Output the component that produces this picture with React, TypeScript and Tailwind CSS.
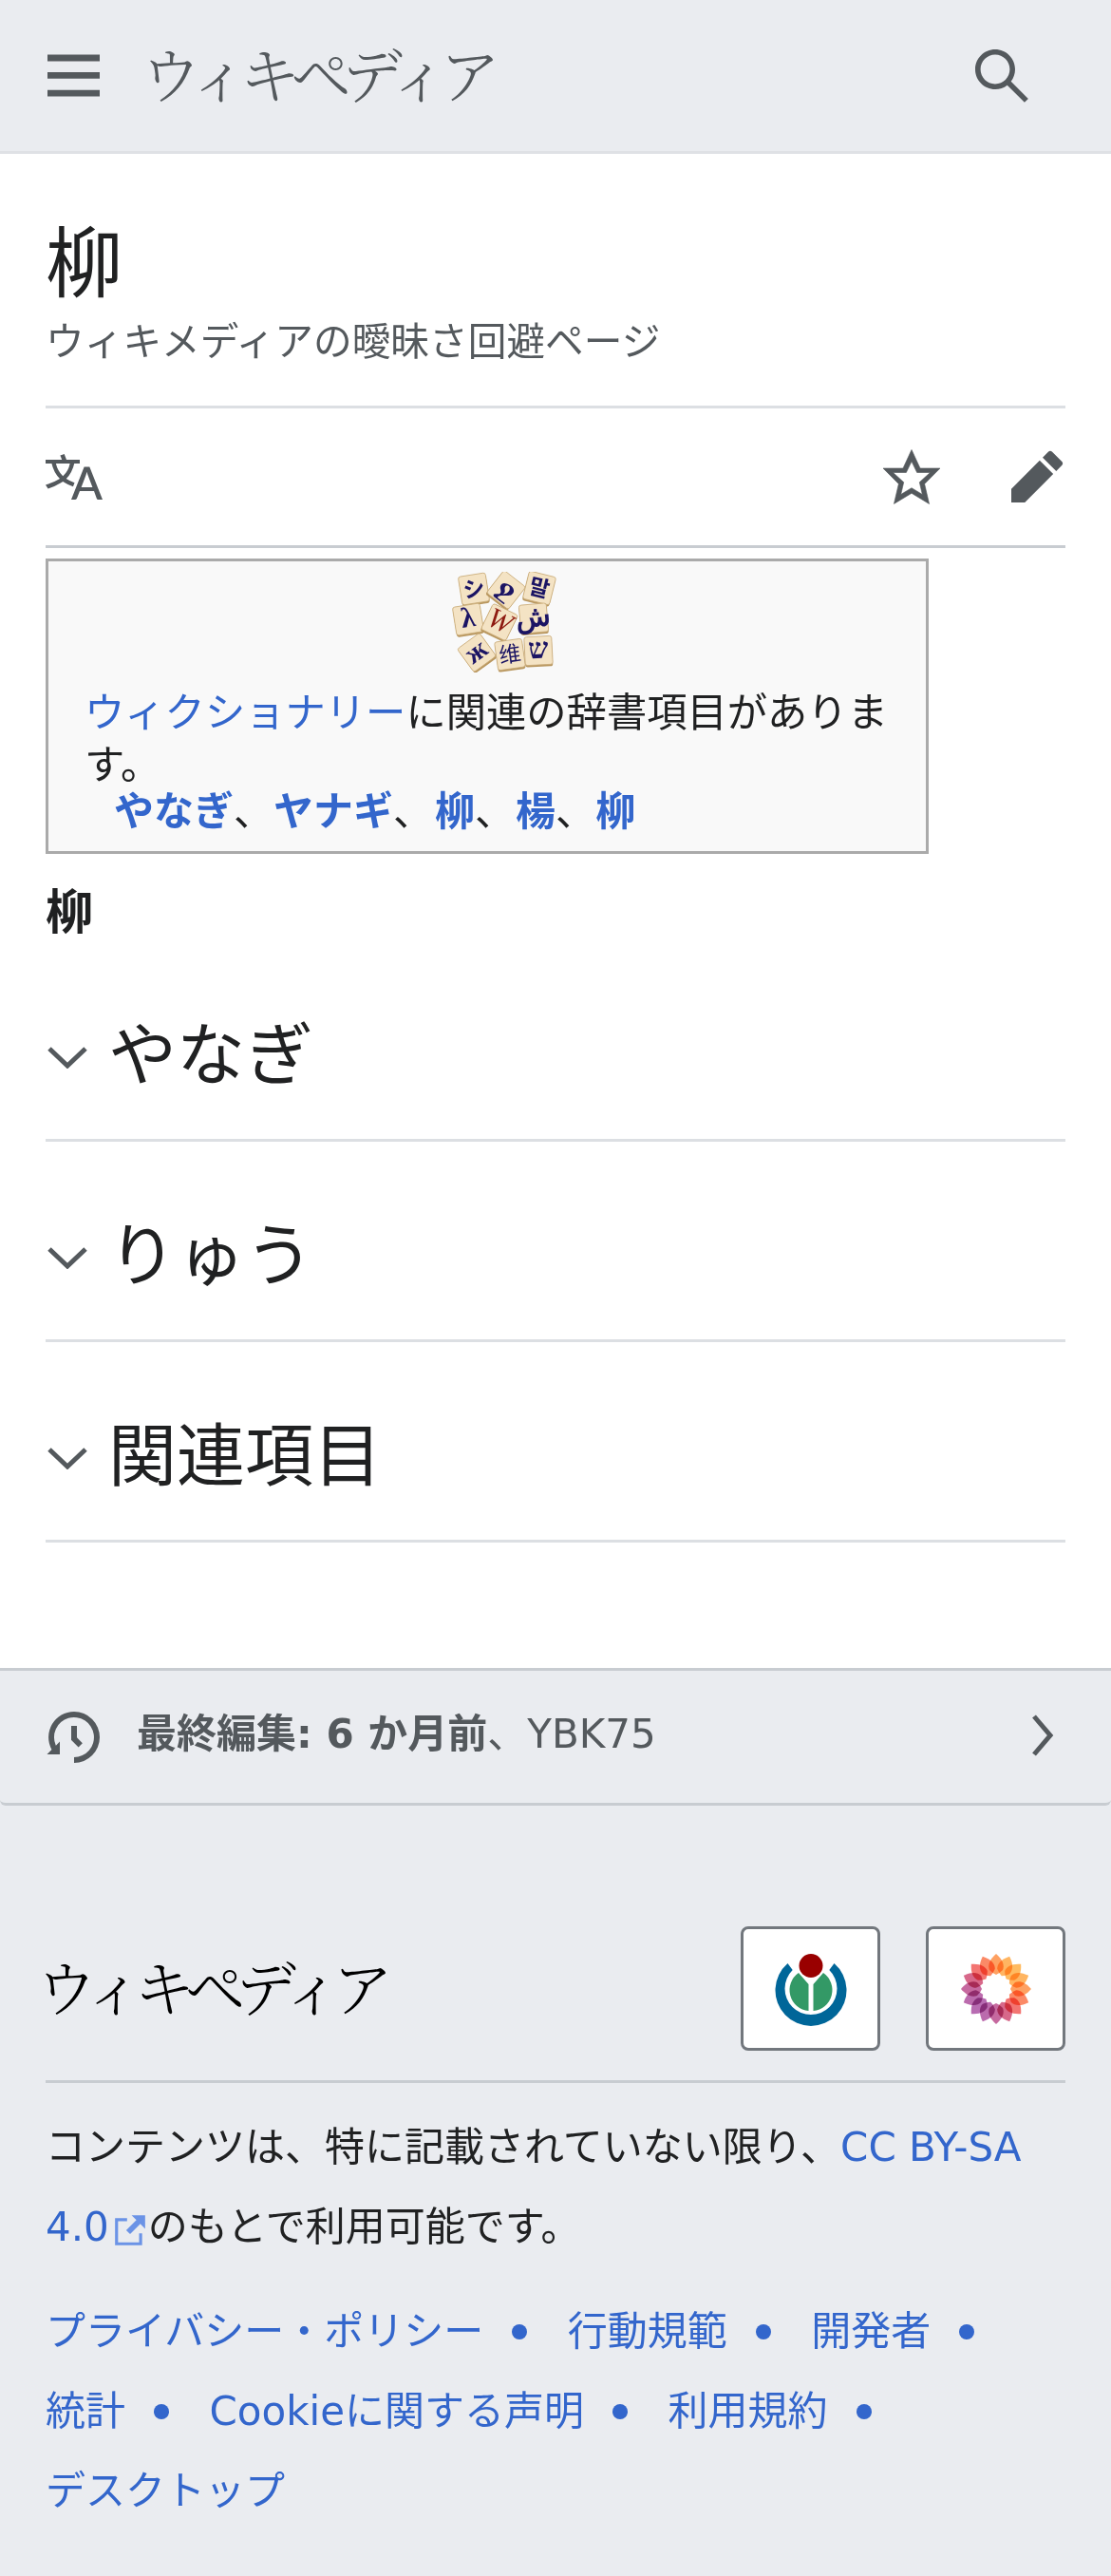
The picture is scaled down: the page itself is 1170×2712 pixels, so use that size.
const FONT = '"DejaVu Sans", "Noto Sans CJK JP", sans-serif';
const LOGO_FONT = '"Noto Serif CJK JP", "Noto Sans CJK JP", serif';

function Icon({ d, className }: { d: string; className: string }) {
  return (
    <svg viewBox="0 0 20 20" className={className} fill="currentColor" aria-hidden="true">
      <path d={d} />
    </svg>
  );
}

const tiles: [number, number, number, string, number][] = [
  [24, 18, -9, "シ", 23],
  [58, 19, 38, "ջ", 27],
  [93, 17, 14, "말", 23],
  [18, 50, -9, "λ", 30],
  [51, 53, 26, "W", 30],
  [87, 49, -5, "ش", 30],
  [27, 85, -36, "ж", 30],
  [62, 87, -8, "维", 23],
  [92, 83, -3, "ש", 30],
];

function WiktionaryLogo() {
  return (
    <svg viewBox="0 0 112 106" className="w-[112px] h-[106px] block" aria-hidden="true">
      {tiles.map(([x, y, r, t, size], i) => (
        <g key={i} transform={`translate(${x} ${y}) rotate(${r})`}>
          <rect x="-14.5" y="-13" width="29" height="30" rx="2.5" fill="#b9975f" />
          <rect x="-14.5" y="-15" width="29" height="30" rx="2.5" fill="#f4e3c4" stroke="#c9ab78" strokeWidth="0.8" />
          <text
            x="0"
            y="8"
            textAnchor="middle"
            fontSize={size}
            fontWeight={t === "W" || t === "维" ? 400 : 700}
            fill={t === "W" ? "#8e1a10" : "#1b1464"}
            fontFamily='"Liberation Serif", "DejaVu Serif", "Noto Sans CJK SC", serif'
            fontStyle={t === "W" ? "italic" : "normal"}
          >
            {t}
          </text>
        </g>
      ))}
    </svg>
  );
}

function WikimediaLogo() {
  return (
    <svg viewBox="0 -3 80 80" className="w-[80px] h-[80px] block" aria-hidden="true">
      <circle cx="40" cy="12.5" r="12.5" fill="#990000" />
      <path d="M15.5 10 A37.5 37.5 0 1 0 64.5 10 L59.3 17 A27.5 27.5 0 1 1 20.7 17 Z" fill="#006699" />
      <path d="M37.5 32 L27 20 A22 22 0 0 0 37.5 60 Z" fill="#339966" />
      <path d="M42.5 32 L53 20 A22 22 0 0 1 42.5 60 Z" fill="#339966" />
    </svg>
  );
}

const STOPS: [number, [number, number, number]][] = [
  [-1, [176, 92, 170]],
  [-0.45, [206, 86, 130]],
  [0.05, [246, 104, 96]],
  [0.55, [253, 136, 82]],
  [1, [255, 180, 80]],
];

function petalColor(t: number) {
  for (let i = 1; i < STOPS.length; i++) {
    if (t <= STOPS[i][0]) {
      const [a, ca] = STOPS[i - 1];
      const [b, cb] = STOPS[i];
      const k = Math.max(0, (t - a) / (b - a));
      const c = ca.map((v, j) => Math.round(v + (cb[j] - v) * k));
      return `rgb(${c[0]},${c[1]},${c[2]})`;
    }
  }
  return "rgb(255,180,80)";
}

function FlowerLogo() {
  const petals = Array.from({ length: 16 }, (_, i) => (i * 360) / 16);
  const d = "M0 -37 C7 -31 9 -25 7 -20 Q3 -16 0 -15 Q-3 -16 -7 -20 C-9 -25 -7 -31 0 -37 Z";
  return (
    <svg viewBox="-40 -40 80 80" className="w-[80px] h-[80px] block" aria-hidden="true">
      {petals.map((a) => {
        const rad = (a * Math.PI) / 180;
        const dx = Math.sin(rad);
        const dy = -Math.cos(rad);
        const t = (dx - dy) / Math.SQRT2;
        return (
          <g key={a} transform={`rotate(${a})`}>
            <path d={d} fill={petalColor(t)} fillOpacity="0.9" style={{ mixBlendMode: "multiply" }} />
          </g>
        );
      })}
    </svg>
  );
}

function Section({ title }: { title: string }) {
  return (
    <div className="h-[211px] pt-[32px] border-b-[3px] border-[#dcdfe3] flex items-center gap-[24px]">
      <svg viewBox="0 0 42 24" className="w-[42px] h-[24px] mt-[4px] ml-[2px] text-[#54595d]" fill="none" stroke="currentColor" strokeWidth="5" aria-hidden="true">
        <path d="M2 3 L21 21 L40 3" />
      </svg>
      <h2 className="text-[72px] leading-none font-normal text-[#202122] -ml-[2px]">{title}</h2>
    </div>
  );
}

const A = ({ children, className = "" }: { children: React.ReactNode; className?: string }) => (
  <a className={`text-[#3366cc] ${className}`}>{children}</a>
);

function FooterLink({ children, last }: { children: React.ReactNode; last?: boolean }) {
  return (
    <span className="inline-flex items-center">
      <A>{children}</A>
      {!last && <span className="w-[16px] h-[16px] rounded-full bg-[#3366cc] ml-[30px] mr-[42.5px]" />}
    </span>
  );
}

export default function App() {
  return (
    <div className="w-[1170px] h-[2712px] bg-white text-[#202122] overflow-hidden flex flex-col" style={{ fontFamily: FONT }}>
      <header className="h-[162px] shrink-0 bg-[#eaecf0] border-b-[3px] border-[#dfe1e5] flex items-center pl-[50px] pr-[87px]">
        <Icon d="M0 2h20v2.5H0zM0 8.7h20v2.5H0zM0 15.5h20V18H0z" className="w-[55px] h-[55px] text-[#54595d]" />
        <span className="ml-[43px] mb-[10px] text-[64px] leading-none tracking-[-10px] text-[#54595d] font-light" style={{ fontFamily: LOGO_FONT }}>ウィキペディア</span>
        <Icon
          d="M7.5 13c3.04 0 5.5-2.46 5.5-5.5S10.54 2 7.5 2 2 4.46 2 7.5 4.46 13 7.5 13m4.55.46A7.43 7.43 0 0 1 7.5 15C3.36 15 0 11.64 0 7.5S3.36 0 7.5 0C11.64 0 15 3.36 15 7.5c0 1.71-.57 3.29-1.54 4.55l6.49 6.49-1.41 1.41z"
          className="w-[56px] h-[56px] ml-auto text-[#54595d]"
        />
      </header>

      <main className="px-[48px] flex-1">
        <h1 className="text-[81px] leading-none font-normal pt-[76px]">柳</h1>
        <p className="text-[40.7px] leading-none text-[#54595d] mt-[21px]">ウィキメディアの曖昧さ回避ページ</p>

        <div className="mt-[46px] h-[150px] border-t-[3px] border-b-[3px] border-t-[#dcdfe3] border-b-[#c8ccd1] flex items-center">
          <Icon
            d="M20 18h-1.44a.6.6 0 0 1-.4-.12.8.8 0 0 1-.23-.31L17 15h-5l-1 2.54a.8.8 0 0 1-.22.3.6.6 0 0 1-.4.14H9l4.55-11.47h1.89zm-3.53-4.31L14.89 9.5a12 12 0 0 1-.39-1.24q-.09.37-.19.69l-.19.56-1.58 4.19zm-6.3-1.58a13.4 13.4 0 0 1-2.91-1.41 11.46 11.46 0 0 0 2.81-5.37H12V4H7.31a4 4 0 0 0-.2-.56C6.87 2.79 6.6 2 6.6 2l-1.47.5s.4.89.6 1.5H0v1.33h2.15A11.23 11.23 0 0 0 5 10.7a17.2 17.2 0 0 1-5 2.1q.56.82.87 1.38a23.3 23.3 0 0 0 5.22-2.51 15.6 15.6 0 0 0 3.56 1.77zM3.63 5.33h4.91a8.1 8.1 0 0 1-2.45 4.45 9.1 9.1 0 0 1-2.46-4.45"
            className="w-[60px] h-[60px] text-[#54595d]"
          />
          <Icon
            d="M20 7h-7L10 .5 7 7H0l5.46 5.47-1.64 7 6.18-3.7 6.18 3.73-1.63-7zm-10 6.9-3.76 2.27 1-4.28L3.5 8.5h4.61L10 4.6l1.9 3.9h4.6l-3.73 3.4 1 4.28z"
            className="w-[60px] h-[60px] ml-auto text-[#54595d] stroke-current stroke-[0.2]"
          />
          <Icon
            d="m16.77 8 1.94-2a1 1 0 0 0 0-1.41l-3.34-3.3a1 1 0 0 0-1.41 0L12 3.23zM1 14.25V19h4.75l9.96-9.96-4.75-4.75z"
            className="w-[60px] h-[60px] ml-[72px] text-[#54595d]"
          />
        </div>

        <div className="mt-[11px] w-[930px] h-[311px] border-[3px] border-[#aaaaaa] bg-[#f9f9f9] pl-[38px] pr-[30px] pt-[11px]">
          <div className="flex justify-center pl-[28px]">
            <WiktionaryLogo />
          </div>
          <p className="text-[42.3px] leading-[55px] mt-[15px]">
            <A>ウィクショナリー</A>に関連の辞書項目がありま<br />す。
          </p>
          <p className="text-[42px] leading-[55px] font-bold pl-[31px] -mt-[6px]">
            <A>やなぎ</A><span className="font-normal">、</span><A>ヤナギ</A><span className="font-normal pr-[2px]">、</span><A>柳</A><span className="font-normal pr-[1px]">、</span><A>楊</A><span className="font-normal">、</span><A>柳</A>
          </p>
        </div>

        <p className="text-[50px] leading-none font-bold mt-[37px]">柳</p>

        <div className="mt-[5px]">
          <Section title="やなぎ" />
          <Section title="りゅう" />
          <Section title="関連項目" />
        </div>
      </main>

      <footer className="bg-[#eaecf0] h-[956px] shrink-0">
        <div className="h-[145px] border-y-[3px] border-[#c8ccd1] rounded-b-[6px] flex items-center pl-[48px] pr-[48px] text-[#54595d]">
          <Icon
            d="M9 6v5h.06l2.48 2.47 1.41-1.41L11 10.11V6zM10 1a9 9 0 0 0-7.85 13.35L.5 16H5v-4.5l-1.39 1.39A7 7 0 1 1 10 17v2a9 9 0 0 0 0-18"
            className="w-[60px] h-[60px] shrink-0"
          />
          <span className="ml-[36px] text-[42px] leading-none -mt-[6px]">
            <b>最終編集: 6 か月前</b>、YBK75
          </span>
          <svg viewBox="0 0 24 44" className="w-[24px] h-[44px] ml-auto mr-[12px] mb-[3px] shrink-0" fill="none" stroke="currentColor" strokeWidth="5" aria-hidden="true">
            <path d="M3 2 L20 22 L3 42" />
          </svg>
        </div>

        <div className="px-[48px]">
          <div className="mt-[127px] h-[165px] border-b-[3px] border-[#c8ccd1] flex items-start">
            <span className="text-[64px] leading-none tracking-[-10.5px] font-light text-black mt-[29px] -ml-[10px]" style={{ fontFamily: LOGO_FONT }}>ウィキペディア</span>
            <div className="ml-auto flex gap-[48px]">
              <div className="w-[147px] h-[131px] bg-white border-[3px] border-[#72777d] rounded-[8px] flex items-center justify-center">
                <WikimediaLogo />
              </div>
              <div className="w-[147px] h-[131px] bg-white border-[3px] border-[#72777d] rounded-[8px] flex items-center justify-center">
                <FlowerLogo />
              </div>
            </div>
          </div>

          <p className="text-[42px] leading-[84px] mt-[26px]">
            コンテンツは、特に記載されていない限り、<A>CC BY-SA</A><br />
            <A>4.0</A>
            <svg viewBox="0 0 12 12" className="inline-block w-[38px] h-[38px] ml-[3px] align-[-8px] text-[#6b93e6]" aria-hidden="true">
              <path fill="currentColor" d="M6.5 1H11v4.5L9.4 3.9 6 7.3 4.7 6 8.1 2.6zM1 2h4v1H2v7h7V7h1v4H1z" />
            </svg>
            のもとで利用可能です。
          </p>

          <div className="text-[42px] leading-[84px] mt-[26px]">
            <div className="flex items-center">
              <FooterLink>プライバシー・ポリシー</FooterLink>
              <FooterLink>行動規範</FooterLink>
              <FooterLink>開発者</FooterLink>
            </div>
            <div className="flex items-center">
              <FooterLink>統計</FooterLink>
              <FooterLink>Cookieに関する声明</FooterLink>
              <FooterLink>利用規約</FooterLink>
            </div>
            <div className="flex items-center">
              <FooterLink last>デスクトップ</FooterLink>
            </div>
          </div>
        </div>
      </footer>
    </div>
  );
}
